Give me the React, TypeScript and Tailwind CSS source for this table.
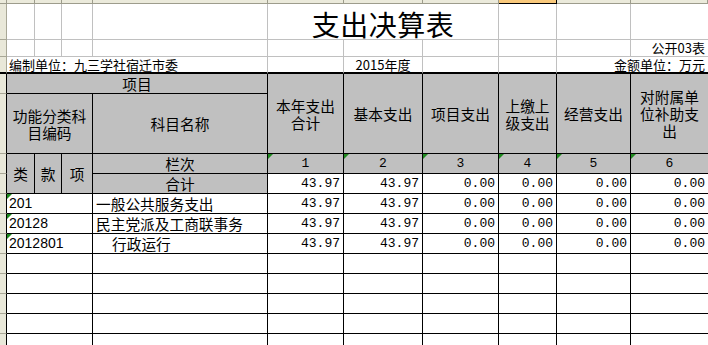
import React from 'react';

const COLS = 'grid grid-cols-[7px_28px_27px_31px_175px_76px_79px_76px_58px_74px_77px]';
const CN = "font-['Noto_Sans_CJK_SC',sans-serif]";
const NUM = "font-['Liberation_Mono',monospace]";

// corner marker Excel puts on numbers stored as text
const Flag = () => (
  <span className="absolute left-0 top-0 w-0 h-0 border-t-[5px] border-r-[5px] border-t-[#1f8a1f] border-r-transparent" />
);

const Strip = ({ cls = '' }: { cls?: string }) => (
  <div className={`bg-[#e9e8d9] border-r border-b border-r-black border-b-[#a8a796] ${cls}`} />
);

const GridCell = ({ cls = '', children }: { cls?: string; children?: React.ReactNode }) => (
  <div className={`border-r border-b border-[#c0c0c0] ${cls}`}>{children}</div>
);

const rows = [
  { code: '201', name: '一般公共服务支出', indent: false, vals: ['43.97', '43.97', '0.00', '0.00', '0.00', '0.00'] },
  { code: '20128', name: '民主党派及工商联事务', indent: false, vals: ['43.97', '43.97', '0.00', '0.00', '0.00', '0.00'] },
  { code: '2012801', name: '行政运行', indent: true, vals: ['43.97', '43.97', '0.00', '0.00', '0.00', '0.00'] },
];

const headCols = [
  { label: <>本年支出<br />合计</>, col: 'col-start-6' },
  { label: <>基本支出</>, col: 'col-start-7' },
  { label: <>项目支出</>, col: 'col-start-8' },
  { label: <>上缴上<br />级支出</>, col: 'col-start-9' },
  { label: <>经营支出</>, col: 'col-start-10' },
  { label: <>对附属单<br />位补助支<br />出</>, col: 'col-start-11 border-r-0' },
];

const numCols = ['col-start-6', 'col-start-7', 'col-start-8', 'col-start-9', 'col-start-10', 'col-start-11 border-r-0'];

export default function App() {
  return (
    <div className={`w-[708px] h-[345px] overflow-hidden bg-white text-black ${CN}`}>
      {/* column header strip */}
      <div className={`${COLS} h-[4px]`}>
        {Array.from({ length: 11 }).map((_, i) => (
          <div
            key={i}
            className={
              i === 8
                ? 'bg-[#f9c97c] border-r border-b border-black'
                : 'bg-[#ebeadb] border-r border-b border-[#9d9c8c]'
            }
          />
        ))}
      </div>

      {/* title */}
      <div className={`${COLS} h-[36px]`}>
        <div className="bg-[#e9e8d9] border-r border-b border-[#a8a796]" />
        <GridCell />
        <GridCell />
        <GridCell />
        <GridCell />
        <GridCell cls="col-span-3 flex items-center justify-center pt-[4px] text-[28px] leading-none tracking-[0.5px]">
          支出决算表
        </GridCell>
        <GridCell />
        <GridCell />
        <GridCell cls="border-r-0" />
      </div>

      <div className={`${COLS} h-[17px] text-[13px] leading-[16px]`}>
        <div className="bg-[#e9e8d9] border-r border-b border-[#a8a796]" />
        {Array.from({ length: 9 }).map((_, i) => (
          <GridCell key={i} />
        ))}
        <GridCell cls="border-r-0 flex items-center justify-end pr-[3px]">公开03表</GridCell>
      </div>

      <div className={`${COLS} h-[17px] text-[13px] leading-[15px]`}>
        <div className="bg-[#e9e8d9] border-r border-r-[#a8a796] border-b-2 border-b-black" />
        <div className="col-span-4 border-r border-r-[#c0c0c0] border-b-2 border-b-black flex items-center pl-[2px] whitespace-nowrap">
          编制单位：九三学社宿迁市委
        </div>
        <div className="border-r border-r-[#c0c0c0] border-b-2 border-b-black" />
        <div className="border-r border-r-[#c0c0c0] border-b-2 border-b-black flex items-center justify-center">
          2015年度
        </div>
        <div className="border-r border-r-[#c0c0c0] border-b-2 border-b-black" />
        <div className="border-r border-r-[#c0c0c0] border-b-2 border-b-black" />
        <div className="col-span-2 border-b-2 border-b-black flex items-center justify-end pr-[3px] whitespace-nowrap">
          金额单位：万元
        </div>
      </div>

      {/* table header */}
      <div className={`${COLS} grid-rows-[20px_60px_20px_20px] text-[14.7px] leading-[17px]`}>
        <Strip cls="col-start-1 row-start-1" />
        <Strip cls="col-start-1 row-start-2" />
        <Strip cls="col-start-1 row-start-3" />
        <Strip cls="col-start-1 row-start-4" />

        <div className="col-start-2 col-span-4 row-start-1 bg-[#c0c0c0] border-r border-b border-black flex items-center justify-center">
          项目
        </div>
        <div className="col-start-2 col-span-3 row-start-2 bg-[#c0c0c0] border-r border-b border-black flex items-center justify-center text-center">
          功能分类科
          <br />
          目编码
        </div>
        <div className="col-start-5 row-start-2 bg-[#c0c0c0] border-r border-b border-black flex items-center justify-center">
          科目名称
        </div>
        {headCols.map((h, i) => (
          <div
            key={i}
            className={`${h.col} row-start-1 row-span-2 bg-[#c0c0c0] border-r border-b border-black flex items-center justify-center text-center`}
          >
            <span>{h.label}</span>
          </div>
        ))}

        <div className="col-start-2 row-start-3 row-span-2 bg-[#c0c0c0] border-r border-b border-black flex items-center justify-center">
          类
        </div>
        <div className="col-start-3 row-start-3 row-span-2 bg-[#c0c0c0] border-r border-b border-black flex items-center justify-center">
          款
        </div>
        <div className="col-start-4 row-start-3 row-span-2 bg-[#c0c0c0] border-r border-b border-black flex items-center justify-center">
          项
        </div>
        <div className="col-start-5 row-start-3 bg-[#c0c0c0] border-r border-b border-black flex items-center justify-center">
          栏次
        </div>
        {numCols.map((c, i) => (
          <div
            key={i}
            className={`${c} row-start-3 relative bg-[#c0c0c0] border-r border-b border-black flex items-center justify-center ${NUM} text-[13px]`}
          >
            <Flag />
            {i + 1}
          </div>
        ))}
        <div className="col-start-5 row-start-4 bg-[#c0c0c0] border-r border-b border-black flex items-center justify-center">
          合计
        </div>
        {numCols.map((c, i) => (
          <div
            key={i}
            className={`${c} row-start-4 border-r border-b border-black flex items-center justify-end pr-[3px] ${NUM} text-[13px]`}
          >
            {rows[0].vals[i]}
          </div>
        ))}
      </div>

      {/* body */}
      {rows.map((r) => (
        <div key={r.code} className={`${COLS} h-[20px] text-[14.7px] leading-[19px]`}>
          <Strip />
          <div className="col-span-3 relative border-r border-b border-black flex items-center pl-[2px] font-['Liberation_Sans',sans-serif] text-[14px]">
            <Flag />
            {r.code}
          </div>
          <div className={`border-r border-b border-black flex items-center whitespace-nowrap ${r.indent ? 'pl-[19px]' : 'pl-[3px]'}`}>
            {r.name}
          </div>
          {r.vals.map((v, i) => (
            <div
              key={i}
              className={`border-b border-black flex items-center justify-end pr-[3px] ${NUM} text-[13px] ${i < 5 ? 'border-r' : ''}`}
            >
              {v}
            </div>
          ))}
        </div>
      ))}

      {Array.from({ length: 5 }).map((_, k) => (
        <div key={k} className={`${COLS} h-[20px]`}>
          <Strip />
          <div className="col-span-3 border-r border-b border-black" />
          <div className="border-r border-b border-black" />
          <div className="border-r border-b border-black" />
          <div className="border-r border-b border-black" />
          <div className="border-r border-b border-black" />
          <div className="border-r border-b border-black" />
          <div className="border-r border-b border-black" />
          <div className="border-b border-black" />
        </div>
      ))}
    </div>
  );
}
